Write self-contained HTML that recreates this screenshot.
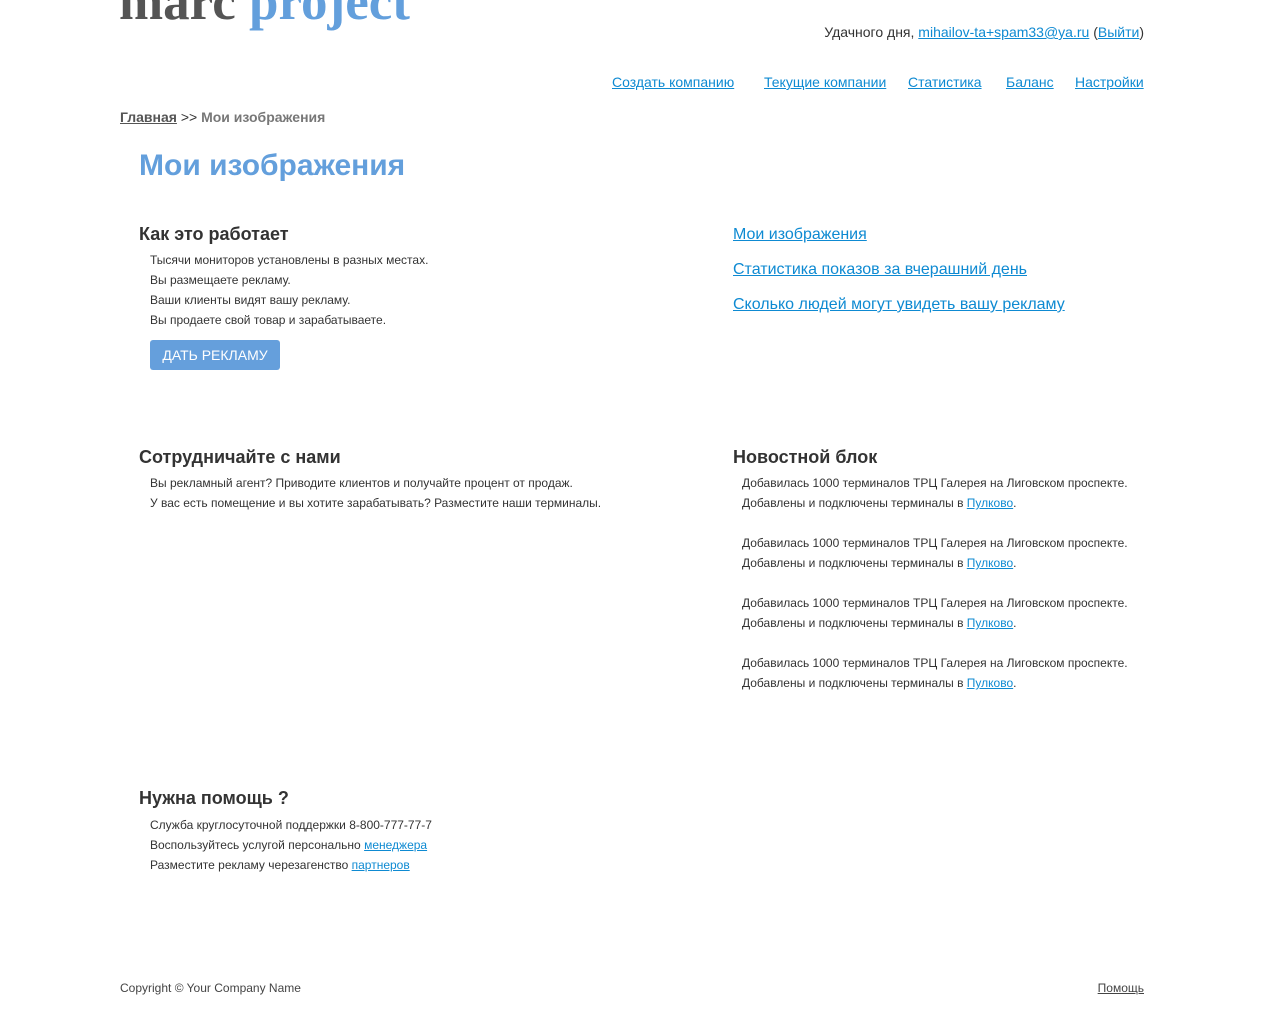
<!DOCTYPE html>
<html><head><meta charset="utf-8"><style>
body{margin:0;width:1263px;height:1024px;background:#fff;font-family:"Liberation Sans",Arial,sans-serif;color:#333;position:relative;overflow:hidden}
.a{position:absolute;white-space:nowrap}
a{color:#0e8ad2;text-decoration:underline}
.s{font-size:12px;line-height:20px}
h2{margin:0;font-size:18px;font-weight:bold;color:#333;position:absolute;white-space:nowrap}
</style></head><body>
<div class="a" style="left:119px;top:-28px;font-family:'Liberation Serif',serif;font-weight:bold;font-size:53px;line-height:60px;letter-spacing:0px"><span style="color:#555">marc</span> <span style="color:#639fdc">project</span></div>
<div class="a" style="right:119px;top:24px;font-size:14px">Удачного дня, <a>mihailov-ta+spam33@ya.ru</a> (<a>Выйти</a>)</div>
<div class="a" style="left:612px;top:74px;font-size:14px"><a>Создать компанию</a></div>
<div class="a" style="left:764px;top:74px;font-size:14px"><a>Текущие компании</a></div>
<div class="a" style="left:908px;top:74px;font-size:14px"><a>Статистика</a></div>
<div class="a" style="left:1006px;top:74px;font-size:14px"><a>Баланс</a></div>
<div class="a" style="left:1075px;top:74px;font-size:14px"><a>Настройки</a></div>
<div class="a" style="left:120px;top:109px;font-size:14px;font-weight:bold;color:#777"><a style="color:#555">Главная</a> <span style="color:#333;font-weight:normal">&gt;&gt;</span> Мои изображения</div>
<div class="a" style="left:139px;top:149px;font-size:30px;font-weight:bold;color:#639fdc">Мои изображения</div>

<h2 style="left:139px;top:224px">Как это работает</h2>
<div class="a s" style="left:150px;top:250px">Тысячи мониторов установлены в разных местах.<br>Вы размещаете рекламу.<br>Ваши клиенты видят вашу рекламу.<br>Вы продаете свой товар и зарабатываете.</div>
<div class="a" style="left:150px;top:340px;width:130px;height:30px;background:#659fdc;border-radius:3px;color:#fff;font-size:14px;line-height:30px;text-align:center">ДАТЬ РЕКЛАМУ</div>

<div class="a" style="left:733px;top:217px;font-size:16px;line-height:35px"><a>Мои изображения</a><br><a>Статистика показов за вчерашний день</a><br><a>Сколько людей могут увидеть вашу рекламу</a></div>

<h2 style="left:139px;top:447px">Сотрудничайте с нами</h2>
<div class="a s" style="left:150px;top:473px">Вы рекламный агент? Приводите клиентов и получайте процент от продаж.<br>У вас есть помещение и вы хотите зарабатывать? Разместите наши терминалы.</div>

<h2 style="left:733px;top:447px">Новостной блок</h2>
<div class="a s" style="left:742px;top:473px">Добавилась 1000 терминалов ТРЦ Галерея на Лиговском проспекте.<br>Добавлены и подключены терминалы в <a>Пулково</a>.</div>
<div class="a s" style="left:742px;top:533px">Добавилась 1000 терминалов ТРЦ Галерея на Лиговском проспекте.<br>Добавлены и подключены терминалы в <a>Пулково</a>.</div>
<div class="a s" style="left:742px;top:593px">Добавилась 1000 терминалов ТРЦ Галерея на Лиговском проспекте.<br>Добавлены и подключены терминалы в <a>Пулково</a>.</div>
<div class="a s" style="left:742px;top:653px">Добавилась 1000 терминалов ТРЦ Галерея на Лиговском проспекте.<br>Добавлены и подключены терминалы в <a>Пулково</a>.</div>

<h2 style="left:139px;top:788px">Нужна помощь ?</h2>
<div class="a s" style="left:150px;top:815px">Служба круглосуточной поддержки 8-800-777-77-7<br>Воспользуйтесь услугой персонально <a>менеджера</a><br>Разместите рекламу черезагенство <a>партнеров</a></div>

<div class="a s" style="left:120px;top:978px;color:#444">Copyright © Your Company Name</div>
<div class="a s" style="right:119px;top:978px"><a style="color:#444">Помощь</a></div>
</body></html>
